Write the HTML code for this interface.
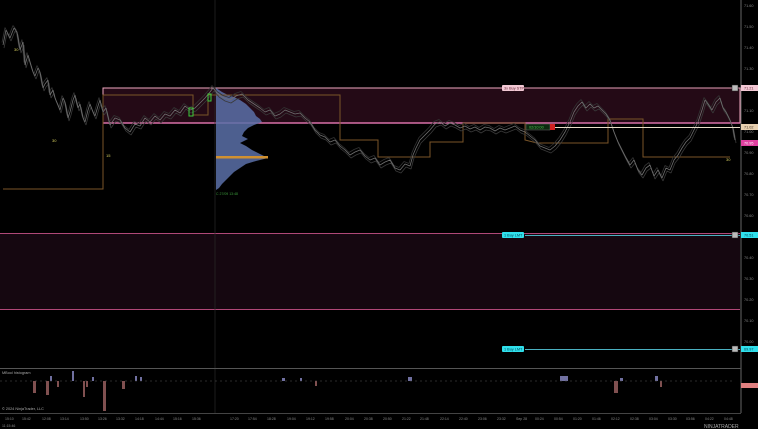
<!DOCTYPE html>
<html><head><meta charset="utf-8"><style>
html,body{margin:0;padding:0;background:#000;width:758px;height:429px;overflow:hidden;font-family:"Liberation Sans",sans-serif}
</style></head><body>
<svg width="758" height="429" viewBox="0 0 758 429" xmlns="http://www.w3.org/2000/svg" font-family="Liberation Sans, sans-serif">
<defs>
<polyline id="p" points="3,45 6,30 10,38 14,28 17,32 20,50 23,42 25,65 28,55 30,62 33,72 35,76 38,68 40,72 43,88 45,84 48,80 50,95 53,90 55,98 58,105 60,110 63,98 65,102 68,118 70,112 73,100 75,95 78,108 80,104 83,118 85,122 88,110 90,104 93,112 95,116 98,106 100,100 103,112 106,108 110,125 115,118 120,120 125,128 130,132 135,124 140,126 145,118 150,122 155,116 160,120 165,114 170,116 175,110 180,113 185,106 190,110 195,108 200,103 205,98 210,92 213,88 218,94 224,98 230,100 236,96 242,94 248,100 254,104 260,108 265,112 270,110 275,116 280,114 285,110 290,112 295,114 300,113 305,118 310,122 315,130 320,135 325,137 330,142 335,140 340,146 345,150 350,155 355,152 360,150 365,156 370,160 375,158 380,165 385,162 390,160 395,168 400,170 405,164 410,166 413,155 416,148 420,140 425,135 430,130 435,124 440,122 445,126 450,123 455,125 460,128 465,126 470,129 475,127 480,130 485,127 490,128 495,131 500,128 505,130 510,128 515,126 520,130 525,132 530,136 535,140 540,146 545,148 550,150 555,146 560,140 565,132 570,122 574,112 578,106 582,102 586,108 590,104 594,108 598,106 602,110 606,114 610,120 614,132 618,142 622,150 626,158 630,165 634,160 638,170 642,175 646,168 650,165 654,176 658,170 662,178 666,168 670,170 674,160 678,155 682,148 686,142 690,138 694,130 698,122 702,110 705,100 708,104 712,110 716,102 720,98 723,108 726,112 730,120 733,128 735,140"/>
</defs>
<rect width="758" height="429" fill="#000"/>
<rect x="103" y="88" width="637" height="35" fill="#240a16" stroke="#f0a8c0" stroke-width="1"/>
<line x1="103" y1="123" x2="740" y2="123" stroke="#d870a8" stroke-width="1.5"/>
<rect x="0" y="233" width="740" height="76" fill="#150710"/>
<line x1="0" y1="233.5" x2="740" y2="233.5" stroke="#b04878"/>
<line x1="0" y1="309.5" x2="740" y2="309.5" stroke="#b04878"/>
<line x1="215" y1="0" x2="215" y2="413" stroke="#2a2a2a" stroke-width="0.7"/>
<polygon points="216,88 222,92 228,95 234,97 240,100 246,104 250,108 254,112 256,116 260,119 262,122 254,125 248,128 244,132 242,136 248,139 240,143 246,146 252,150 258,153 264,156 268,158 256,161 246,164 240,168 234,172 230,176 226,180 222,184 219,188 216,190" fill="#5a70a8" opacity="0.85"/>
<rect x="216" y="156" width="52" height="2.5" fill="#d09030"/>
<polyline points="3,189 103,189 103,95 193,95 193,115 208,115 208,95 340,95 340,140 378,140 378,157 430,157 430,142 463,142 463,123 525,123 525,140 537,143 608,143 608,119 643,119 643,157 730,157" fill="none" stroke="#7a5528" stroke-width="1"/>
<g fill="none" stroke-linejoin="bevel">
<use href="#p" transform="translate(1,3)" stroke="#3a3a3a" stroke-width="0.8"/>
<use href="#p" transform="translate(-1,-2.5)" stroke="#333" stroke-width="0.8"/>
<use href="#p" stroke="#707070" stroke-width="0.8"/>
</g>
<rect x="189" y="108" width="4" height="8" fill="none" stroke="#3ccc3c"/>
<rect x="208" y="94" width="3" height="7" fill="none" stroke="#3ccc3c"/>
<text x="14" y="51" font-size="4" fill="#d8d060">30</text>
<text x="52" y="142" font-size="4" fill="#d8d060">30</text>
<text x="106" y="157" font-size="4" fill="#d8d060">15</text>
<text x="726" y="161" font-size="4" fill="#d8d060">30</text>
<text x="216" y="195" font-size="3.5" fill="#3a9a3a">C 27/09 13:48</text>
<line x1="525" y1="88" x2="740" y2="88" stroke="#e8a0b8"/>
<rect x="502" y="85" width="22" height="6" rx="1" fill="#f2c8d4"/>
<text x="504" y="89.5" font-size="3.8" fill="#602030">3x Buy STP</text>
<line x1="555" y1="127.5" x2="740" y2="127.5" stroke="#e8dcc8"/>
<rect x="526" y="124" width="24" height="6" fill="#0c2a10" stroke="#6a6a6a" stroke-width="0.5"/>
<text x="529" y="128.5" font-size="3.8" fill="#50c050">02/10:00</text>
<rect x="550" y="124" width="5" height="6" fill="#d02020"/>
<line x1="525" y1="235.5" x2="740" y2="235.5" stroke="#4ab0c0"/>
<rect x="502" y="232" width="22" height="6" rx="1" fill="#30e0ec"/>
<text x="504" y="236.5" font-size="3.8" fill="#004050">1 Buy LMT</text>
<line x1="525" y1="349.5" x2="740" y2="349.5" stroke="#4ab0c0"/>
<rect x="502" y="346" width="22" height="6" rx="1" fill="#30e0ec"/>
<text x="504" y="350.5" font-size="3.8" fill="#004050">1 Buy LMT</text>
<g fill="#bbb" stroke="#222" stroke-width="0.5">
<rect x="732" y="85" width="6" height="6"/><rect x="732" y="232" width="6" height="6"/><rect x="732" y="346" width="6" height="6"/></g>
<line x1="741" y1="0" x2="741" y2="413" stroke="#666"/>
<g font-size="3.8" fill="#888">
<text x="744" y="7">71.60</text><text x="744" y="28">71.50</text><text x="744" y="49">71.40</text><text x="744" y="70">71.30</text><text x="744" y="112">71.10</text><text x="744" y="133">71.00</text><text x="744" y="154">70.90</text><text x="744" y="175">70.80</text><text x="744" y="196">70.70</text><text x="744" y="217">70.60</text><text x="744" y="259">70.40</text><text x="744" y="280">70.30</text><text x="744" y="301">70.20</text><text x="744" y="322">70.10</text><text x="744" y="343">70.00</text>
</g>
<rect x="741" y="85" width="17" height="6" fill="#f2c8d4"/><text x="744" y="89.5" font-size="3.8" fill="#602030">71.21</text>
<rect x="741" y="124" width="17" height="6" fill="#e8d0b0"/><text x="744" y="128.5" font-size="3.8" fill="#403020">71.02</text>
<rect x="741" y="140" width="17" height="6" fill="#e040a0"/><text x="744" y="144.5" font-size="3.8" fill="#fff">70.95</text>
<rect x="741" y="232" width="17" height="6" fill="#30e0ec"/><text x="744" y="236.5" font-size="3.8" fill="#004050">70.51</text>
<rect x="741" y="346" width="17" height="6" fill="#30e0ec"/><text x="744" y="350.5" font-size="3.8" fill="#004050">69.97</text>
<line x1="0" y1="368.5" x2="741" y2="368.5" stroke="#555"/>
<text x="2" y="374" font-size="3.8" fill="#aaa">MBool histogram</text>
<g fill="#7070a0"><rect x="72" y="371" width="2" height="10"/><rect x="50" y="376" width="2" height="5"/><rect x="92" y="377" width="2" height="4"/><rect x="140" y="377" width="2" height="4"/><rect x="408" y="377" width="4" height="4"/><rect x="560" y="376" width="8" height="5"/><rect x="655" y="376" width="3" height="5"/><rect x="135" y="376" width="2" height="5"/><rect x="282" y="378" width="3" height="3"/><rect x="300" y="378" width="2" height="3"/><rect x="620" y="378" width="3" height="3"/></g>
<g fill="#805050"><rect x="33" y="381" width="3" height="12"/><rect x="46" y="381" width="3" height="14"/><rect x="83" y="381" width="2" height="16"/><rect x="103" y="381" width="3" height="30"/><rect x="122" y="381" width="3" height="8"/><rect x="315" y="381" width="2" height="5"/><rect x="614" y="381" width="4" height="12"/><rect x="660" y="381" width="2" height="6"/><rect x="86" y="381" width="2" height="6"/><rect x="57" y="381" width="2" height="6"/></g>
<line x1="0" y1="381" x2="735" y2="381" stroke="#555" stroke-width="0.6" stroke-dasharray="2,3"/>
<text x="2" y="410" font-size="3.8" fill="#aaa">© 2024 NinjaTrader, LLC</text>
<rect x="741" y="383" width="17" height="5" fill="#e08080"/>
<line x1="0" y1="413.5" x2="741" y2="413.5" stroke="#444"/>
<g font-size="3.5" fill="#888">
<text x="5" y="420">15:10</text><text x="22" y="420">15:42</text><text x="42" y="420">12:08</text><text x="60" y="420">13:14</text><text x="80" y="420">13:50</text><text x="98" y="420">13:26</text><text x="116" y="420">13:32</text><text x="135" y="420">14:18</text><text x="155" y="420">14:44</text><text x="173" y="420">15:16</text><text x="192" y="420">15:36</text><text x="230" y="420">17:20</text><text x="248" y="420">17:54</text><text x="267" y="420">18:28</text><text x="287" y="420">19:04</text><text x="306" y="420">19:12</text><text x="325" y="420">19:58</text><text x="345" y="420">20:04</text><text x="364" y="420">20:38</text><text x="383" y="420">20:50</text><text x="402" y="420">21:22</text><text x="420" y="420">21:48</text><text x="440" y="420">22:14</text><text x="459" y="420">22:40</text><text x="478" y="420">23:06</text><text x="497" y="420">23:32</text><text x="516" y="420">Sep 28</text><text x="535" y="420">00:24</text><text x="554" y="420">00:54</text><text x="573" y="420">01:20</text><text x="592" y="420">01:46</text><text x="611" y="420">02:12</text><text x="630" y="420">02:38</text><text x="649" y="420">03:04</text><text x="668" y="420">03:30</text><text x="686" y="420">03:56</text><text x="705" y="420">04:22</text><text x="724" y="420">04:48</text>
<text x="2" y="427">11:15:46</text>
</g>
<text x="704" y="428" font-size="5" fill="#aaa">NINJATRADER</text>
</svg>
</body></html>
